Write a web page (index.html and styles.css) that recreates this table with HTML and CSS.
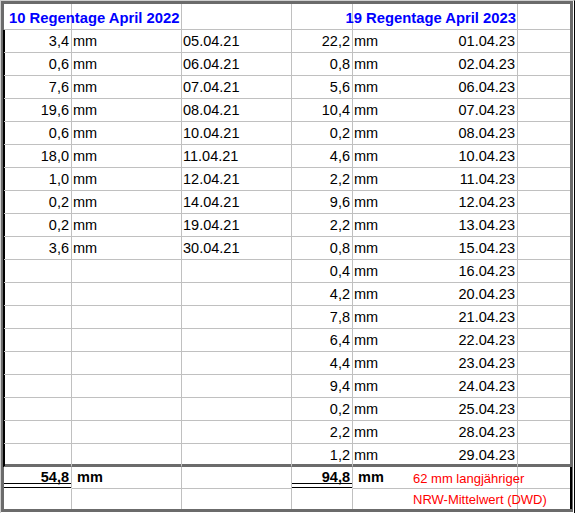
FILE: index.html
```html
<!DOCTYPE html>
<html lang="de">
<head>
<meta charset="utf-8">
<title>Regentage April</title>
<link rel="stylesheet" href="styles.css">
</head>
<body>
<div class="frame">
  <div class="sheet">
    <div class="c a hdr hdr-left">10 Regentage April 2022</div><div class="c b"></div><div class="c c3"></div><div class="c d"></div><div class="c e1"></div><div class="c e2 hdr hdr-right">19 Regentage April 2023</div><div class="c f"></div>

    <div class="c a num lb">3,4</div><div class="c b">mm</div><div class="c c3">05.04.21</div><div class="c d num">22,2</div><div class="c e1">mm</div><div class="c e2 num">01.04.23</div><div class="c f"></div>
    <div class="c a num lb">0,6</div><div class="c b">mm</div><div class="c c3">06.04.21</div><div class="c d num">0,8</div><div class="c e1">mm</div><div class="c e2 num">02.04.23</div><div class="c f"></div>
    <div class="c a num lb">7,6</div><div class="c b">mm</div><div class="c c3">07.04.21</div><div class="c d num">5,6</div><div class="c e1">mm</div><div class="c e2 num">06.04.23</div><div class="c f"></div>
    <div class="c a num lb">19,6</div><div class="c b">mm</div><div class="c c3">08.04.21</div><div class="c d num">10,4</div><div class="c e1">mm</div><div class="c e2 num">07.04.23</div><div class="c f"></div>
    <div class="c a num lb">0,6</div><div class="c b">mm</div><div class="c c3">10.04.21</div><div class="c d num">0,2</div><div class="c e1">mm</div><div class="c e2 num">08.04.23</div><div class="c f"></div>
    <div class="c a num lb">18,0</div><div class="c b">mm</div><div class="c c3">11.04.21</div><div class="c d num">4,6</div><div class="c e1">mm</div><div class="c e2 num">10.04.23</div><div class="c f"></div>
    <div class="c a num lb">1,0</div><div class="c b">mm</div><div class="c c3">12.04.21</div><div class="c d num">2,2</div><div class="c e1">mm</div><div class="c e2 num">11.04.23</div><div class="c f"></div>
    <div class="c a num lb">0,2</div><div class="c b">mm</div><div class="c c3">14.04.21</div><div class="c d num">9,6</div><div class="c e1">mm</div><div class="c e2 num">12.04.23</div><div class="c f"></div>
    <div class="c a num lb">0,2</div><div class="c b">mm</div><div class="c c3">19.04.21</div><div class="c d num">2,2</div><div class="c e1">mm</div><div class="c e2 num">13.04.23</div><div class="c f"></div>
    <div class="c a num lb">3,6</div><div class="c b">mm</div><div class="c c3">30.04.21</div><div class="c d num">0,8</div><div class="c e1">mm</div><div class="c e2 num">15.04.23</div><div class="c f"></div>
    <div class="c a num lb"></div><div class="c b"></div><div class="c c3"></div><div class="c d num">0,4</div><div class="c e1">mm</div><div class="c e2 num">16.04.23</div><div class="c f"></div>
    <div class="c a num lb"></div><div class="c b"></div><div class="c c3"></div><div class="c d num">4,2</div><div class="c e1">mm</div><div class="c e2 num">20.04.23</div><div class="c f"></div>
    <div class="c a num lb"></div><div class="c b"></div><div class="c c3"></div><div class="c d num">7,8</div><div class="c e1">mm</div><div class="c e2 num">21.04.23</div><div class="c f"></div>
    <div class="c a num lb"></div><div class="c b"></div><div class="c c3"></div><div class="c d num">6,4</div><div class="c e1">mm</div><div class="c e2 num">22.04.23</div><div class="c f"></div>
    <div class="c a num lb"></div><div class="c b"></div><div class="c c3"></div><div class="c d num">4,4</div><div class="c e1">mm</div><div class="c e2 num">23.04.23</div><div class="c f"></div>
    <div class="c a num lb"></div><div class="c b"></div><div class="c c3"></div><div class="c d num">9,4</div><div class="c e1">mm</div><div class="c e2 num">24.04.23</div><div class="c f"></div>
    <div class="c a num lb"></div><div class="c b"></div><div class="c c3"></div><div class="c d num">0,2</div><div class="c e1">mm</div><div class="c e2 num">25.04.23</div><div class="c f"></div>
    <div class="c a num lb"></div><div class="c b"></div><div class="c c3"></div><div class="c d num">2,2</div><div class="c e1">mm</div><div class="c e2 num">28.04.23</div><div class="c f"></div>
    <div class="c a num lb last"></div><div class="c b last"></div><div class="c c3 last"></div><div class="c d num last">1,2</div><div class="c e1 last">mm</div><div class="c e2 num last">29.04.23</div><div class="c f last"></div>

    <div class="c a num sum dbl">54,8</div><div class="c b sum">&nbsp;mm</div><div class="c c3"></div><div class="c d num sum dbl">94,8</div><div class="c e1 sum">&nbsp;mm</div><div class="c e2 note">62 mm langjähriger</div><div class="c f rb"></div>
    <div class="c a end"></div><div class="c b end"></div><div class="c c3 end"></div><div class="c d end"></div><div class="c e1 end"></div><div class="c e2 note end">NRW-Mittelwert (DWD)</div><div class="c f end rb"></div>
  </div>
</div>
</body>
</html>
```

FILE: styles.css
```css
* { box-sizing: border-box; }

html, body {
  margin: 0;
  padding: 0;
  background: #ffffff;
}

body {
  width: 575px;
  height: 514px;
  overflow: hidden;
  font-family: "Liberation Sans", Arial, sans-serif;
  font-size: 14.5px;
  color: #000;
}

.frame {
  width: 575px;
  border-top: 1px solid #d0d0d0;
  border-left: 1px solid #d0d0d0;
  border-right: 1px solid #000;
  padding-right: 1px;
  padding-bottom: 1px;
}

.sheet {
  width: 572px;
  display: grid;
  grid-template-columns: 68px 110px 110px 61px 60px 105px 52px;
  grid-template-rows: 26px repeat(19, 23px) 22px 20px;
  border: 3px solid #6b6b6b;
  background: #fff;
}

.c {
  border-right: 1px solid #c0c0c0;
  border-bottom: 1px solid #c0c0c0;
  padding: 0 1px 2px 1px;
  display: flex;
  align-items: flex-end;
  white-space: nowrap;
  line-height: 17px;
}

.e1 { border-right: none; }
.f { border-right: none; }

.num { justify-content: flex-end; padding-right: 2px; }

.hdr {
  font-weight: bold;
  font-size: 14.8px;
  color: #0000ff;
  padding-bottom: 2px;
}
.hdr-left { padding-left: 5px; }
.hdr-right { justify-content: flex-end; padding-right: 1px; }

.lb { box-shadow: -1px 0 0 #000, inset 1px 0 0 #000; }

.last {
  border-bottom-color: #6b6b6b;
  box-shadow: inset 0 -2px 0 #6b6b6b;
}
.lb.last { box-shadow: -1px 0 0 #000, inset 1px 0 0 #000, inset 0 -2px 0 #6b6b6b; }

.sum { font-weight: bold; }

.dbl {
  background:
    linear-gradient(#000, #000) left bottom 4px / 100% 1px no-repeat,
    linear-gradient(#000, #000) left bottom 0 / 100% 1px no-repeat;
  border-bottom-color: transparent;
}

.note {
  color: #ff0000;
  font-size: 13px;
  padding-left: 0;
  padding-bottom: 2px;
  line-height: 15px;
}

.end { border-bottom: none; }

.rb { box-shadow: 2px 0 0 #000; }
```
